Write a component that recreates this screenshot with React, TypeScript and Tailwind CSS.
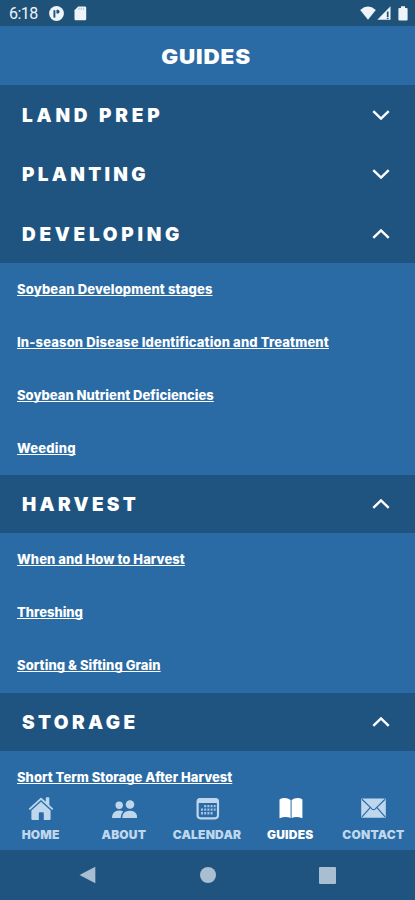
import React from 'react'
import { clsx } from 'clsx'

const sections = [
    { title: 'LAND PREP', tracking: 'tracking-[3.8px]', height: 'h-[59px]', open: false, links: [] },
    { title: 'PLANTING', tracking: 'tracking-[3.3px]', height: 'h-[60px]', open: false, links: [] },
    {
        title: 'DEVELOPING',
        tracking: 'tracking-[3.7px]',
        height: 'h-[59px]',
        open: true,
        links: [
            { label: 'Soybean Development stages', tracking: 'tracking-[0.15px]' },
            { label: 'In-season Disease Identification and Treatment', tracking: 'tracking-[0.15px]' },
            { label: 'Soybean Nutrient Deficiencies', tracking: 'tracking-[0.02px]' },
            { label: 'Weeding', tracking: 'tracking-[0.2px]' },
        ],
    },
    {
        title: 'HARVEST',
        tracking: 'tracking-[3.3px]',
        height: 'h-[58px]',
        open: true,
        links: [
            { label: 'When and How to Harvest', tracking: 'tracking-[0.06px]' },
            { label: 'Threshing', tracking: 'tracking-[0px]' },
            { label: 'Sorting & Sifting Grain', tracking: 'tracking-[0.08px]' },
        ],
    },
    {
        title: 'STORAGE',
        tracking: 'tracking-[3.4px]',
        height: 'h-[58px]',
        open: true,
        links: [{ label: 'Short Term Storage After Harvest', tracking: 'tracking-[0.03px]' }],
    },
]

const HomeIcon = () => (
    <svg width="26" height="26" viewBox="0 0 26 26" fill="currentColor">
        <path d="M13 1.4 L17.8 5.8 V2 Q17.8 1.2 18.6 1.2 H20.5 Q21.3 1.2 21.3 2 V9 L25.3 12.7 L24.1 14 L13 3.9 L1.9 14 L0.7 12.7 Z" />
        <path d="M13 5.7 L22.6 14.4 V22.9 Q22.6 23.9 21.6 23.9 H15.8 V17.2 Q15.8 16.2 14.8 16.2 H11.8 Q10.8 16.2 10.8 17.2 V23.9 H4.6 Q3.4 23.9 3.4 22.9 V14.4 Z" />
    </svg>
)

const AboutIcon = () => (
    <svg width="26" height="26" viewBox="0 0 26 26" fill="currentColor">
        <circle cx="8.2" cy="9.2" r="3.7" />
        <circle cx="19" cy="8.5" r="4.3" />
        <path d="M1 22 Q1.2 14.9 8.2 14.6 Q10.5 14.6 12.2 15.5 Q9.8 17.7 9.6 22 Z" />
        <path d="M11.2 22 Q11.4 14.7 18.8 14.7 Q26.1 14.7 26.3 22 Z" />
    </svg>
)

const CalendarIcon = () => (
    <svg width="26" height="26" viewBox="0 0 26 26" fill="none">
        <rect x="3.6" y="3.1" width="20.4" height="19.2" rx="3" stroke="currentColor" strokeWidth="2.2" />
        <path d="M3 6.9 V5 Q3 2.2 6 2.2 H21.6 Q24.6 2.2 24.6 5 V6.9 Z" fill="currentColor" />
        <g fill="currentColor" opacity="0.85">
            <path d="M10.2 8.9h2v2.4h-2zM13.4 8.9h2v2.4h-2zM16.6 8.9h2v2.4h-2zM19.8 8.9h1.8v2.4h-1.8z" />
            <path d="M7 12.4h2v2.4H7zM10.2 12.4h2v2.4h-2zM13.4 12.4h2v2.4h-2zM16.6 12.4h2v2.4h-2zM19.8 12.4h1.8v2.4h-1.8z" />
            <path d="M7 16h2v2.4H7zM10.2 16h2v2.4h-2zM13.4 16h2v2.4h-2zM16.6 16h2v2.4h-2z" />
        </g>
    </svg>
)

const GuidesIcon = () => (
    <svg width="26" height="26" viewBox="0 0 26 26" fill="currentColor">
        <path d="M13.6 4 Q11 2.1 7.6 2.1 Q4.6 2.1 2.5 3.4 V22.2 Q8.8 20 13.6 22 Z" />
        <path d="M14.6 4 Q17.2 2.1 20.5 2.1 Q23.5 2.1 25.4 3.4 V22.2 Q19.2 20 14.6 22 Z" />
    </svg>
)

const ContactIcon = () => (
    <svg width="26" height="26" viewBox="0 0 26 26">
        <rect x="1.2" y="2.4" width="24.6" height="19.4" rx="1.2" fill="currentColor" />
        <path
            d="M2 3.3 L12.2 13.1 Q13.6 14.3 15 13.1 L25.1 3.3 M2 20.9 L10.2 11.7 M25.1 20.9 L17 11.7"
            fill="none"
            stroke="#2a6ba5"
            strokeWidth="1.2"
        />
    </svg>
)

const tabs = [
    { label: 'HOME', Icon: HomeIcon, active: false },
    { label: 'ABOUT', Icon: AboutIcon, active: false },
    { label: 'CALENDAR', Icon: CalendarIcon, active: false },
    { label: 'GUIDES', Icon: GuidesIcon, active: true },
    { label: 'CONTACT', Icon: ContactIcon, active: false },
]

const StatusBar = () => (
    <div className="h-[26px] shrink-0 bg-[#1f5278] flex items-center justify-between pl-[9px] pr-[7px] text-[#eef4fa]">
        <div className="flex items-center pt-px">
            <span className="w-[29px] font-['Roboto',sans-serif] text-[16px] leading-none whitespace-nowrap tracking-[-0.5px]">6:18</span>
            <svg className="ml-[11px]" width="15" height="15" viewBox="0 0 15 15">
                <circle cx="7.5" cy="7.5" r="7.4" fill="currentColor" />
                <path d="M5.4 11.6 V4.2" stroke="#1f5278" strokeWidth="1.9" />
                <path d="M7.8 4 H8.6 Q10.3 4.2 10.3 5.7 Q10.3 7.2 8.6 7.3 H7.8 Z" fill="#1f5278" stroke="#1f5278" strokeWidth="0.6" />
            </svg>
            <svg className="ml-[10px]" width="13" height="15" viewBox="0 0 13 15">
                <path d="M4.2 0.5 H11 Q12.2 0.5 12.2 1.7 V13 Q12.2 14.2 11 14.2 H1.7 Q0.5 14.2 0.5 13 V4.3 Z" fill="currentColor" />
                <path d="M5 1.8v2M7.2 1.8v2M9.4 1.8v2" stroke="#9db4c8" strokeWidth="0.9" />
            </svg>
        </div>
        <div className="flex items-center">
            <svg width="16" height="14" viewBox="0 0 16 14">
                <path d="M8 13.7 L0.2 3.9 Q8 -2.8 15.8 3.9 Z" fill="currentColor" />
            </svg>
            <svg className="ml-px" width="14" height="14" viewBox="0 0 14 14">
                <path d="M13.5 0.3 V13.8 H0.3 Z" fill="currentColor" />
                <path d="M10.7 5.5v5.7M10.7 12v1" stroke="#1f5278" strokeWidth="1.7" />
            </svg>
            <svg className="ml-[7px]" width="10" height="15" viewBox="0 0 10 15">
                <path d="M3 0.3h4v1.6h1.6q1 0 1 1v10.6q0 1-1 1H1.4q-1 0-1-1V2.9q0-1 1-1H3z" fill="currentColor" />
            </svg>
        </div>
    </div>
)

const Chevron = ({ open }: { open: boolean }) => (
    <svg width="18" height="12" viewBox="0 0 18 12" fill="none" stroke="white" strokeWidth="2.4">
        <path d={open ? 'M1.3 9.8 L9 2.4 L16.7 9.8' : 'M1.3 2.2 L9 9.6 L16.7 2.2'} />
    </svg>
)

const App = () => {
    return (
        <div className="w-full h-[900px] overflow-hidden flex flex-col bg-[#2a6ba5] font-['Inter',sans-serif] text-white">
            <StatusBar />
            <header className="h-[59px] shrink-0 flex items-center justify-center pt-[2px] pr-[2px]">
                <h1 className="text-[20px] font-black tracking-[0.8px] whitespace-nowrap scale-x-[1.12]">GUIDES</h1>
            </header>
            <main className="h-[708px] shrink-0 overflow-hidden">
                {sections.map((section) => (
                    <section key={section.title}>
                        <div className={clsx('bg-[#205480] flex items-center justify-between pl-[22px] pr-[25px]', section.height)}>
                            <h2 className={clsx('text-[19px] font-black whitespace-nowrap pt-[3px]', section.tracking)}>{section.title}</h2>
                            <Chevron open={section.open} />
                        </div>
                        {section.links.length > 0 && (
                            <ul className={section.links.length === 3 ? 'pb-px' : ''}>
                                {section.links.map((link) => (
                                    <li key={link.label} className="h-[53px] flex items-center pl-[17px] pt-px">
                                        <a className={clsx('text-[13px] font-extrabold underline underline-offset-1 decoration-[1.2px] [text-decoration-skip-ink:none] whitespace-nowrap', link.tracking)}>
                                            {link.label}
                                        </a>
                                    </li>
                                ))}
                            </ul>
                        )}
                    </section>
                ))}
            </main>
            <nav className="h-[57px] w-[416px] -ml-px shrink-0 grid grid-cols-5">
                {tabs.map(({ label, Icon, active }) => (
                    <div key={label} className={clsx('flex flex-col items-center pt-[3px]', active ? 'text-white' : 'text-[#bfd7ec]')}>
                        <Icon />
                        <span className="mt-[6px] text-[12px] leading-[14px] font-black tracking-[0.2px] whitespace-nowrap">{label}</span>
                    </div>
                ))}
            </nav>
            <div className="h-[50px] shrink-0 bg-[#205480] flex items-center justify-between pl-[79px] pr-[79px] text-[#a9bfd1]">
                <svg width="17" height="18" viewBox="0 0 17 18" fill="currentColor">
                    <path d="M16.3 0.8 V17.2 L0.5 9 Z" />
                </svg>
                <div className="size-4 rounded-full bg-current" />
                <div className="size-[17px] rounded-[1px] bg-current" />
            </div>
        </div>
    )
}

export default App
